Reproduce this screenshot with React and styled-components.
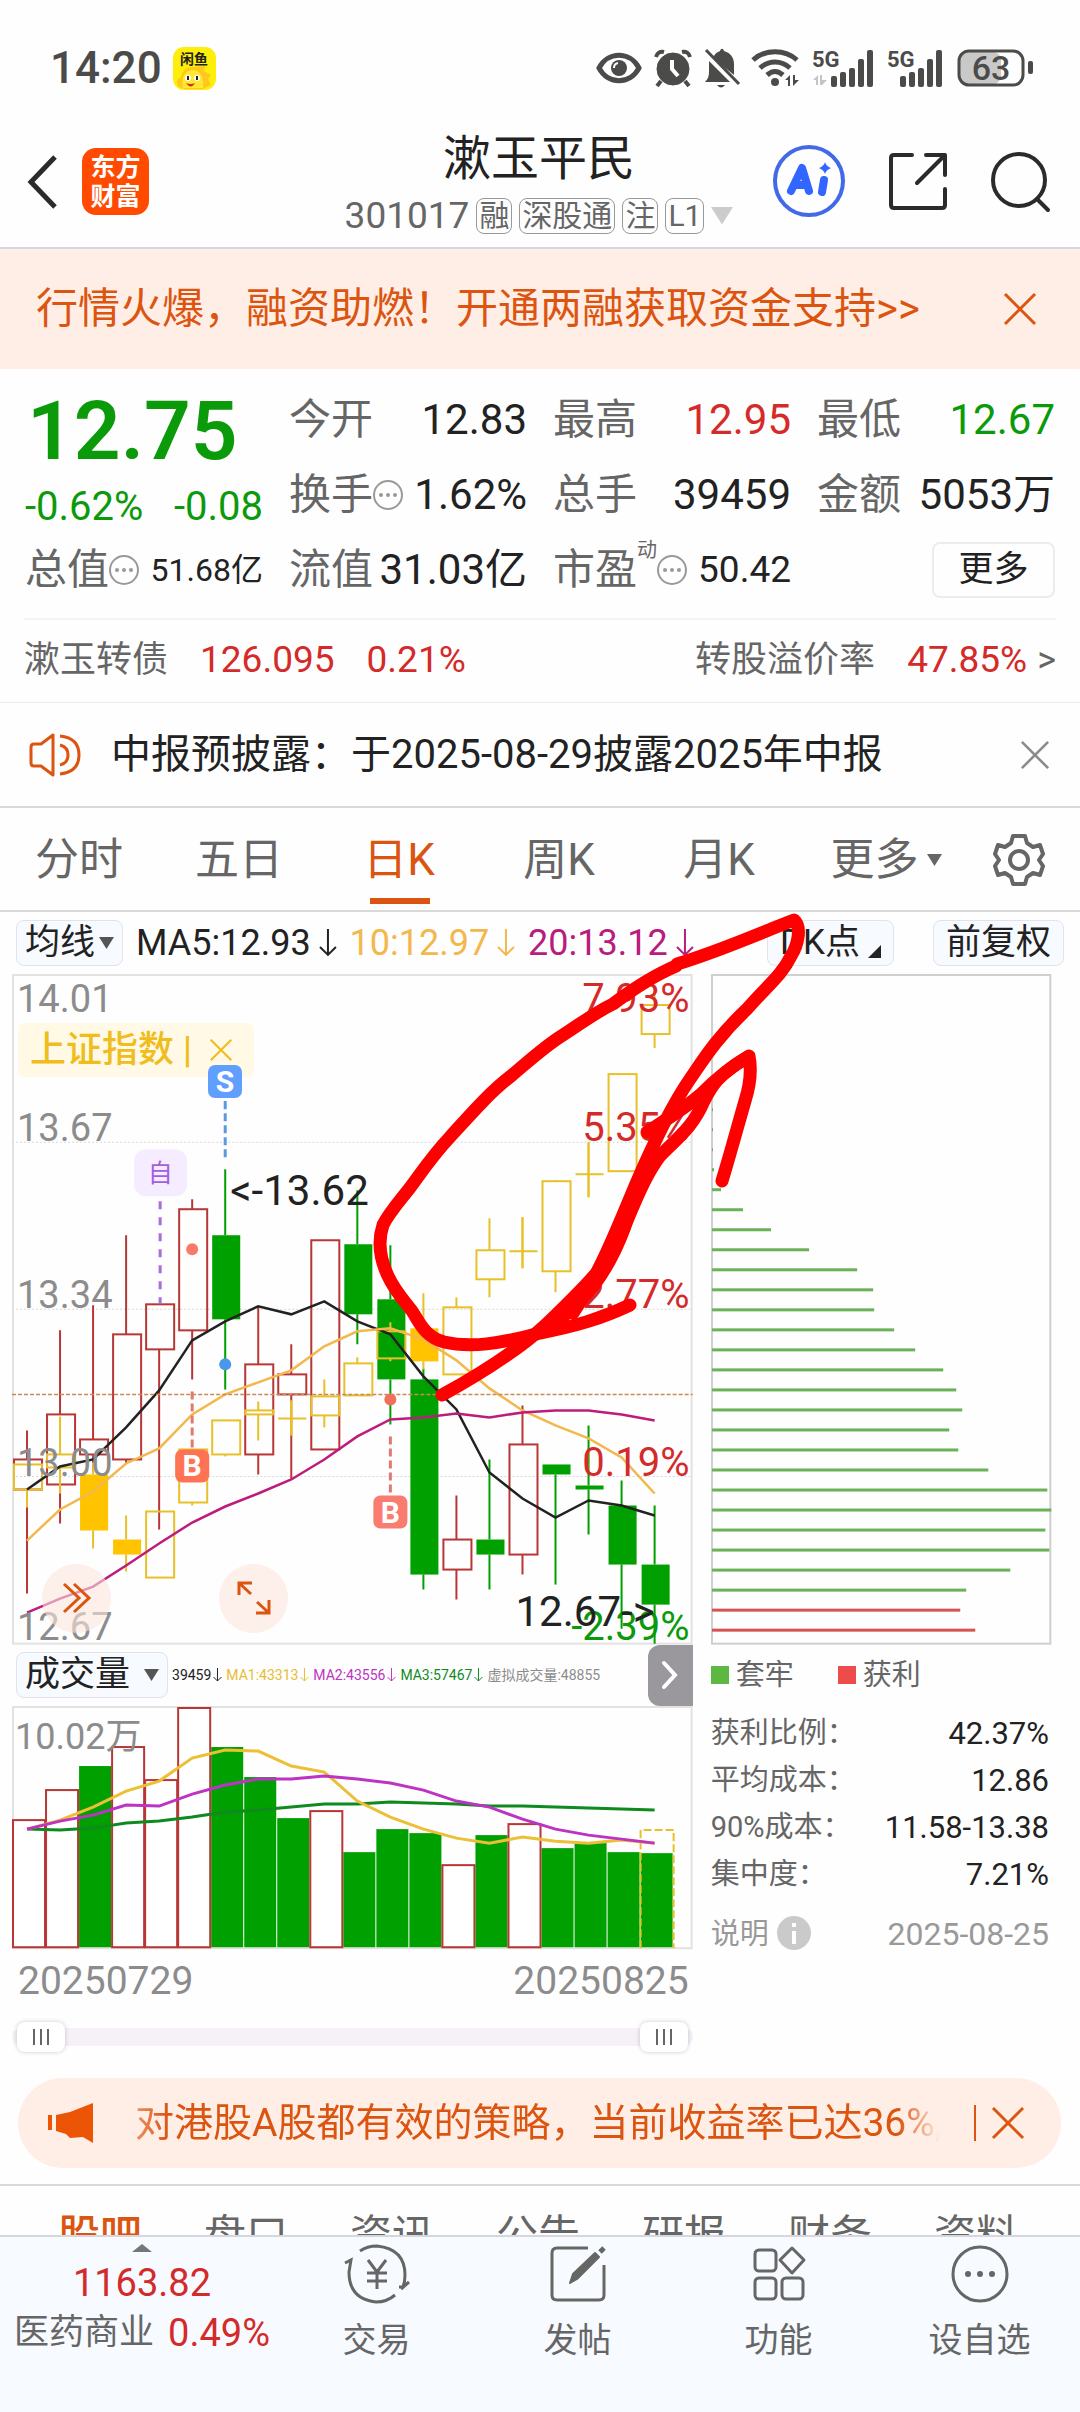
import React from "react";
import styled, { createGlobalStyle, css } from "styled-components";

const color = {
  text: "#222",
  label: "#666",
  muted: "#8c8c8c",
  up: "#d42a2a",
  down: "#0a9a0a",
  candleUp: "#b93636",
  candleDown: "#00a000",
  index: "#e8c02a",
  accent: "#dc5510",
  peach: "#ffeee6",
  line: "#d9d9d9"
};

const GlobalStyle = createGlobalStyle`
  *, *::before, *::after {
    box-sizing: border-box;
  }
  body {
    margin: 0;
    background: #fefefe;
    color: ${color.text};
    font-family: Roboto, "Noto Sans CJK SC", sans-serif;
  }
  button {
    font: inherit;
    color: inherit;
    background: none;
    border: 0;
    padding: 0;
    cursor: pointer;
  }
  a {
    color: inherit;
    text-decoration: none;
  }
  svg {
    display: block;
    flex-shrink: 0;
    overflow: visible;
  }
`;

const Page = styled.div`
  display: flex;
  flex-direction: column;
  min-height: 100vh;
  overflow: hidden;
`;

/* ---------- status bar ---------- */

const StatusBar = styled.div`
  display: flex;
  align-items: center;
  min-height: 124px;
  padding: 12px 46px 0 50px;
  color: #4b4b49;
`;

const Clock = styled.time`
  font-size: 44px;
  line-height: 48px;
  font-weight: 500;
`;

const StatusIcons = styled.div`
  display: flex;
  align-items: center;
  gap: 12px;
  margin-left: auto;
`;

const FishIcon = styled.svg`
  margin-left: 11px;
`;

/* ---------- header ---------- */

const Header = styled.header`
  display: grid;
  grid-template-columns: 1fr auto 1fr;
  align-items: center;
  min-height: 125px;
  padding: 0 29px 0 27px;
  border-bottom: 2px solid #d5d7e0;
`;

const HeaderSide = styled.div`
  display: flex;
  align-items: center;
  justify-content: ${props => (props.$end ? "flex-end" : "flex-start")};
  gap: ${props => (props.$end ? 43 : 24)}px;
  padding-bottom: 8px;
`;

const Brand = styled.a`
  display: flex;
  align-items: center;
  justify-content: center;
  width: 67px;
  height: 67px;
  border-radius: 14px;
  background: #ff4a00;
  color: #fff;
  font-size: 25px;
  line-height: 29px;
  font-weight: 700;
  text-align: center;
`;

const Title = styled.h1`
  margin: 0;
  font-size: 48px;
  line-height: 60px;
  font-weight: 400;
  text-align: center;
`;

const SubTitle = styled.div`
  display: flex;
  align-items: center;
  justify-content: center;
  gap: 7px;
  font-size: 37px;
  line-height: 54px;
  color: ${color.label};
`;

const Tag = styled.span`
  height: 36px;
  padding: 0 2px;
  border: 1px solid #999;
  border-radius: 8px;
  font-size: 30px;
  line-height: 34px;
`;

/* ---------- strips ---------- */

const Promo = styled.section`
  display: flex;
  align-items: center;
  justify-content: space-between;
  min-height: 120px;
  padding: 0 44px 0 36px;
  background: ${color.peach};
  color: ${color.accent};
  font-size: 42px;
  line-height: 60px;
`;

const Notice = styled.section`
  display: flex;
  align-items: center;
  min-height: 105px;
  padding: 0 31px 0 29px;
  border-bottom: 2px solid ${color.line};
  font-size: 40px;
  line-height: 56px;

  > button {
    margin-left: auto;
  }
`;

const NoticeText = styled.a`
  margin-left: 30px;
`;

/* ---------- quote ---------- */

const Quote = styled.section`
  display: grid;
  grid-template-columns: repeat(4, 1fr);
  grid-auto-rows: 75px;
  column-gap: 26px;
  padding: 13px 25px 11px;
`;

const PriceCell = styled.div`
  grid-row: span 2;
  color: ${color.down};
`;

const Price = styled.div`
  padding-left: 2px;
  font-size: 82px;
  line-height: 98px;
  font-weight: 600;
`;

const Change = styled.div`
  display: flex;
  justify-content: space-between;
  font-size: 40px;
  line-height: 54px;
`;

const Stat = styled.div`
  display: flex;
  align-items: center;
  white-space: nowrap;
  font-size: 42px;
  line-height: 60px;
  color: ${color.label};
`;

const StatValue = styled.span`
  margin-left: auto;
  font-size: ${props => props.$size || 42}px;
  color: ${props => color[props.$tone] || color.text};
`;

const Super = styled.sup`
  align-self: flex-start;
  font-size: 20px;
  line-height: 36px;
`;

const MoreButton = styled.button`
  justify-self: end;
  align-self: center;
  width: 123px;
  height: 56px;
  border: 2px solid #ececee;
  border-radius: 8px;
  font-size: 35px;
  line-height: 50px;
`;

const BondRow = styled.a`
  display: flex;
  align-items: center;
  gap: 32px;
  min-height: 84px;
  margin: 0 24px;
  padding-bottom: 2px;
  border-top: 2px solid #f4f4f4;
  font-size: 36px;
  line-height: 50px;
  color: ${color.label};
`;

const BondRule = styled.div`
  border-bottom: 1px solid #ececec;
`;

const BondValue = styled.span`
  font-size: 37px;
  color: ${color.up};
`;

const BondGroup = styled.span`
  display: flex;
  align-items: center;
  gap: ${props => (props.$tight ? 10 : 32)}px;
  margin-left: ${props => (props.$end ? "auto" : 0)};
`;

/* ---------- period tabs ---------- */

const Tabs = styled.nav`
  display: grid;
  grid-template-columns: repeat(6, 4fr) 3fr;
  align-items: stretch;
  min-height: 104px;
  border-bottom: 2px solid ${color.line};
`;

const Tab = styled.button`
  display: flex;
  align-items: center;
  justify-content: center;
  gap: 8px;
  padding: ${props => (props.$menu ? "2px 0 0 12px" : "2px 2px 0 0")};
  font-size: 44px;
  line-height: 60px;
  color: ${color.label};
  border-top: 6px solid transparent;
  border-bottom: 6px solid transparent;

  ${props =>
    props.$active &&
    css`
      color: ${color.accent};
      background: linear-gradient(${color.accent}, ${color.accent}) center
        bottom / 60px 6px no-repeat;
    `}
`;

/* ---------- chart toolbars ---------- */

const ChartArea = styled.section`
  position: relative;
`;

const Toolbar = styled.div`
  display: flex;
  align-items: center;
  gap: 13px;
  min-height: 62px;
  padding: 0 16px;
  font-size: 36px;
  line-height: 46px;
`;

const Chip = styled.button`
  display: flex;
  align-items: center;
  gap: ${props => props.$gap || 4}px;
  height: 46px;
  padding: 0 ${props => (props.$wide ? 12 : 8)}px;
  border: 1px solid #dfe3ec;
  border-radius: 8px;
  background: #f7faff;
  font-size: 35px;
  line-height: 44px;
  white-space: nowrap;
`;

const ToolbarEnd = styled.div`
  display: flex;
  gap: 39px;
  margin-left: auto;
`;

const MaLabel = styled.span`
  display: flex;
  align-items: center;
  gap: 8px;
  color: ${props => props.$color};
`;

const Columns = styled.div`
  display: grid;
  grid-template-columns: 2fr 1fr;
  column-gap: 18px;
  padding: 0 29px 0 12px;
`;

const ChartBox = styled.div`
  position: relative;
`;

const ChartSvg = styled.svg`
  width: 100%;
  height: auto;

  text {
    font-size: 38px;
  }
  .percent {
    font-size: 40px;
  }
  .note {
    font-size: 42px;
  }
  .marker {
    font-size: 30px;
    font-weight: 700;
    fill: #fff;
  }
  .self {
    font-size: 25px;
    fill: #a35fe0;
  }
  .volume {
    font-size: 36px;
  }
`;

const Ink = styled.svg`
  position: absolute;
  top: 0;
  left: 0;
  width: 100%;
  pointer-events: none;
`;

const OverlayPill = styled.button`
  position: absolute;
  top: 49px;
  left: 6px;
  display: flex;
  align-items: center;
  gap: 18px;
  height: 54px;
  padding: 0 22px 0 12px;
  border-radius: 6px;
  background: rgba(255, 247, 220, 0.7);
  color: #efbd1c;
  font-size: 36px;
  line-height: 54px;
  font-weight: 500;
  white-space: nowrap;
`;

const RoundButton = styled.button`
  position: absolute;
  bottom: 12px;
  left: ${props => props.$left}px;
  display: flex;
  align-items: center;
  justify-content: center;
  width: 69px;
  height: 69px;
  border-radius: 50%;
  background: rgba(252, 228, 218, 0.6);
`;

const VolumeBar = styled.div`
  display: flex;
  align-items: center;
  gap: 4px;
  min-height: 61px;
  padding-left: 4px;
  white-space: nowrap;
`;

const VolumeLabel = styled.span`
  display: flex;
  align-items: center;
  gap: 2px;
  color: ${props => props.$color};
  font-size: 14px;
  line-height: 24px;
`;

const Expand = styled.button`
  display: flex;
  align-items: center;
  justify-content: center;
  width: 45px;
  height: 61px;
  margin-left: auto;
  border-radius: 12px 0 0 12px;
  background: #9a989c;
`;

const Dates = styled.div`
  display: flex;
  justify-content: space-between;
  padding: 8px 4px 0 6px;
  font-size: 39px;
  line-height: 48px;
  color: ${color.muted};
`;

const Range = styled.div`
  display: grid;
  align-items: center;
  height: 18px;
  margin-top: 23px;
  padding: 0 5px;
  border-radius: 9px;
  background: #f5f1f6;
`;

const RangeHandle = styled.input`
  grid-area: 1 / 1;
  appearance: none;
  width: 100%;
  height: 18px;
  margin: 0;
  background: none;
  pointer-events: none;

  &::-webkit-slider-thumb {
    appearance: none;
    pointer-events: auto;
    width: 48px;
    height: 30px;
    border-radius: 8px;
    box-shadow: 0 0 4px rgba(60, 40, 80, 0.25);
    background: linear-gradient(
          90deg,
          #666 2px,
          transparent 2px 7px,
          #666 7px 9px,
          transparent 9px 14px,
          #666 14px
        )
        center / 16px 16px no-repeat,
      #fff;
  }
`;

/* ---------- chip distribution ---------- */

const Legend = styled.div`
  display: flex;
  gap: 44px;
  padding-top: 8px;
  font-size: 29px;
  line-height: 44px;
  color: ${color.label};
`;

const LegendItem = styled.span`
  display: flex;
  align-items: center;
  gap: 7px;

  &::before {
    content: "";
    width: 18px;
    height: 18px;
    background: ${props => props.$color};
  }
`;

const CostTable = styled.table`
  width: 100%;
  margin-top: 13px;
  border-collapse: collapse;
  font-size: 31px;
  line-height: 47px;

  th {
    padding: 0;
    font-size: 29px;
    font-weight: 400;
    text-align: left;
    color: ${color.label};
  }
  td {
    padding: 0 2px 0 0;
    text-align: right;
  }
`;

const CostFoot = styled.div`
  display: flex;
  align-items: center;
  gap: 8px;
  padding: 12px 2px 0 0;
  font-size: 29px;
  line-height: 48px;
  color: #999;

  time {
    margin-left: auto;
    font-size: 32px;
  }
`;

/* ---------- bottom ---------- */

const Strategy = styled.section`
  display: flex;
  align-items: center;
  min-height: 90px;
  margin: 32px 19px 16px 18px;
  padding: 0 37px 0 30px;
  border-radius: 45px;
  background: ${color.peach};
  color: ${color.accent};
`;

const StrategyText = styled.a`
  flex: 1;
  min-width: 0;
  margin: 0 18px 0 41px;
  overflow: hidden;
  white-space: nowrap;
  font-size: 39px;
  line-height: 56px;
  mask-image: linear-gradient(
    90deg,
    rgba(0, 0, 0, 0.6),
    #000 4% 93%,
    transparent 98%
  );
`;

const StrategyRule = styled.span`
  width: 2px;
  height: 36px;
  margin-right: 16px;
  background: ${color.accent};
`;

const SectionTabs = styled.nav`
  display: grid;
  grid-template-columns: repeat(7, 1fr);
  height: 51px;
  padding: 20px 31px 0 27px;
  overflow: hidden;
  border-top: 2px solid ${color.line};
  font-size: 42px;
  line-height: 60px;
  text-align: center;
  color: ${color.label};
`;

const SectionTab = styled.a`
  color: ${props => (props.$active ? color.accent : "inherit")};
  font-weight: ${props => (props.$active ? 500 : 400)};
`;

const BottomNav = styled.nav`
  display: grid;
  grid-template-columns: 276fr repeat(4, 201fr);
  flex: 1;
  min-height: 174px;
  border-top: 2px solid #d5d7e0;
  background: #f7faff;
  color: ${color.label};
`;

const NavItem = styled.a`
  display: flex;
  flex-direction: column;
  align-items: center;
  gap: 12px;
  padding-top: 8px;
  font-size: 34px;
  line-height: 50px;
`;

const IndexItem = styled.a`
  display: flex;
  flex-direction: column;
  align-items: center;
  padding: 7px 0 0 8px;
  white-space: nowrap;
  font-size: 35px;
  line-height: 50px;
`;

const IndexValue = styled.span`
  margin-top: 6px;
  font-size: 38px;
  color: ${color.up};
`;

const IndexRow = styled.span`
  display: flex;
  gap: 14px;

  strong {
    font-size: 38px;
    font-weight: 400;
    color: ${color.up};
  }
`;

/* ---------- small drawings ---------- */

const Cross = ({ size = 32, stroke = color.accent, width = 3 }) => (
  <svg width={size} height={size} viewBox="0 0 32 32" stroke={stroke} strokeWidth={width}>
    <path d="M1 1 31 31M31 1 1 31" />
  </svg>
);

const Triangle = ({ size = 15, fill = "#555" }) => (
  <svg width={size} height={size * 0.8} viewBox="0 0 20 16" fill={fill}>
    <path d="M0 0H20L10 16Z" />
  </svg>
);

const DownArrow = ({ size = 28 }) => (
  <svg width={size * 0.64} height={size} viewBox="0 0 18 28" fill="none" stroke="currentColor" strokeWidth="2">
    <path d="M9 0V26M1 18 9 26 17 18" />
  </svg>
);

const Dots = () => (
  <svg width="30" height="30" viewBox="0 0 30 30" fill="#999">
    <circle cx="15" cy="15" r="14" fill="none" stroke="#999" strokeWidth="2" />
    <circle cx="8" cy="15" r="2" />
    <circle cx="15" cy="15" r="2" />
    <circle cx="22" cy="15" r="2" />
  </svg>
);

const Signal = ({ faded }) => (
  <svg width={faded ? 63 : 58} height="38" viewBox={faded ? "0 0 63 38" : "0 0 58 38"} fill="#4b4b49">
    <text x="0" y="18" fontSize="22" fontWeight="700">
      5G
    </text>
    {faded && <path d="M1 31 6 26V36H4V31ZM8 26V36H10L15 31H10V26Z" fill="#c4c4c4" />}
    {[0, 1, 2, 3, 4].map(i => (
      <rect
        key={i}
        x={(faded ? 19 : 13) + i * 9}
        y={[27, 23, 19, 10, 1][i]}
        width="6"
        height={[11, 15, 19, 28, 37][i]}
        rx="2"
      />
    ))}
  </svg>
);

const StatusGlyphs = () => (
  <StatusIcons>
    <svg width="46" height="30" viewBox="0 0 46 30">
      <path d="M3 15C12 -2 34 -2 43 15C34 32 12 32 3 15Z" fill="none" stroke="#4b4b49" strokeWidth="5" />
      <circle cx="23" cy="15" r="8" fill="#4b4b49" />
      <path d="M18 15a5 5 0 0 1 4-5" fill="none" stroke="#fff" strokeWidth="2" />
    </svg>
    <svg width="38" height="38" viewBox="0 0 38 38" stroke="#4b4b49" fill="none">
      <circle cx="19" cy="20" r="16" fill="#4b4b49" />
      <path d="M2 8C3 4 6 2 10 3M28 3c4-1 7 1 8 5M7 32l-4 5M31 32l4 5" strokeWidth="4" />
      <path d="M18 11V20L24 27" stroke="#fff" strokeWidth="4" />
    </svg>
    <svg width="36" height="40" viewBox="0 0 36 40" fill="#4b4b49">
      <path d="M9 10C11 5 14 4 16 3C17 0 19 0 20 3C27 5 30 10 30 16V27ZM5 13 26 34H1C4 31 5 28 5 24Z" />
      <path d="M2 2 35 36" stroke="#4b4b49" strokeWidth="3" />
      <path d="M13 37H21Q17 42 13 37Z" />
    </svg>
    <svg width="48" height="38" viewBox="0 0 48 38" fill="none" stroke="#4b4b49" strokeWidth="5">
      <path d="M1 11C13 0 33 0 45 11M8 19C17 11 29 11 38 19M15 26Q23 19 31 26" />
      <circle cx="23" cy="33" r="4" fill="#4b4b49" stroke="none" />
      <path d="M33 31 38 26V37H36V31ZM41 26V37L47 31H43V26Z" fill="#4b4b49" stroke="none" />
    </svg>
    <Signal faded />
    <Signal />
    <svg width="77" height="38" viewBox="0 0 77 38">
      <rect x="2" y="3" width="42" height="32" rx="8" fill="#c9c9c9" />
      <rect x="2" y="2" width="64" height="34" rx="10" fill="none" stroke="#4b4b49" strokeWidth="3" />
      <rect x="71" y="12" width="5" height="13" rx="2" fill="#4b4b49" />
      <text x="34" y="31" textAnchor="middle" fontSize="34" fontWeight="500" fill="#4b4b49">
        63
      </text>
    </svg>
  </StatusIcons>
);

/* ---------- chart data, in chart units ---------- */

const step = 33;
const centre = i => 27 + i * step;

// kind, high, body top, body bottom, low
const candles = [
  ["up", 1430, 1459, 1489, 1593],
  ["up", 1330, 1414, 1484, 1523],
  ["up", 1305, 1439, 1454, 1471],
  ["up", 1235, 1334, 1459, 1463],
  ["up", 1304, 1304, 1349, 1529],
  ["up", 1199, 1209, 1330, 1379],
  ["down", 1169, 1235, 1319, 1389],
  ["up", 1306, 1364, 1454, 1474],
  ["up", 1344, 1374, 1394, 1478],
  ["up", 1240, 1240, 1449, 1449],
  ["down", 1190, 1244, 1314, 1344],
  ["down", 1245, 1299, 1379, 1424],
  ["down", 1368, 1379, 1574, 1589],
  ["up", 1495, 1539, 1569, 1599],
  ["down", 1459, 1539, 1554, 1589],
  ["up", 1405, 1444, 1554, 1574],
  ["down", 1464, 1464, 1474, 1584],
  ["down", 1425, 1485, 1489, 1534],
  ["down", 1480, 1505, 1564, 1628],
  ["down", 1505, 1564, 1604, 1643]
];

const indexCandles = [
  ["hollow", 1464, 1464, 1489, 1507],
  ["hollow", 1416, 1454, 1467, 1493],
  ["solid", 1462, 1474, 1530, 1548],
  ["solid", 1515, 1539, 1554, 1571],
  ["hollow", 1511, 1511, 1577, 1577],
  ["hollow", 1449, 1449, 1502, 1505],
  ["hollow", 1420, 1420, 1454, 1456],
  ["hollow", 1401, 1410, 1414, 1440],
  ["cross", 1400, 1418, 1418, 1435],
  ["hollow", 1379, 1396, 1415, 1427],
  ["hollow", 1357, 1363, 1395, 1395],
  ["hollow", 1322, 1331, 1358, 1361],
  ["solid", 1293, 1328, 1361, 1369],
  ["hollow", 1297, 1307, 1374, 1374],
  ["hollow", 1218, 1250, 1279, 1297],
  ["cross", 1217, 1251, 1251, 1268],
  ["hollow", 1180, 1181, 1271, 1292],
  ["cross", 1142, 1174, 1174, 1197],
  ["hollow", 1074, 1074, 1171, 1171],
  ["hollow", 987, 1005, 1034, 1048]
];

const averages = [
  ["#222", [1489, 1466, 1459, 1427, 1390, 1340, 1321, 1306, 1314, 1301, 1321, 1334, 1376, 1409, 1472, 1498, 1517, 1500, 1505, 1515]],
  ["#f3b84c", [1540, 1509, 1491, 1463, 1448, 1414, 1394, 1382, 1370, 1346, 1331, 1328, 1339, 1360, 1388, 1410, 1425, 1438, 1457, 1493]],
  ["#bd1c7d", [1612, 1598, 1586, 1565, 1543, 1522, 1506, 1493, 1479, 1459, 1436, 1419, 1417, 1413, 1417, 1412, 1410, 1410, 1414, 1420]]
];

const priceAxis = [
  [1012, "14.01", "7.93%"],
  [1141, "13.67", "5.35%"],
  [1308, "13.34", "2.77%"],
  [1476, "13.00", "0.19%"],
  [1639, "12.67", "-2.39%"]
];

const volumes = [
  ["up", 1820], ["up", 1790], ["down", 1766], ["up", 1747], ["up", 1780],
  ["up", 1708], ["down", 1747], ["down", 1777], ["down", 1818], ["up", 1811],
  ["down", 1852], ["down", 1829], ["down", 1833], ["up", 1865], ["down", 1835],
  ["up", 1824], ["down", 1848], ["down", 1843], ["down", 1852], ["down", 1853]
];

const volumeAverages = [
  ["#0f8a1f", [1829, 1830, 1828, 1823, 1821, 1817, 1812, 1810, 1807, 1804, 1804, 1802, 1803, 1804, 1806, 1806, 1807, 1808, 1809, 1810]],
  ["#ecbf35", [1829, 1820, 1807, 1791, 1781, 1758, 1750, 1751, 1766, 1772, 1801, 1817, 1829, 1838, 1843, 1837, 1841, 1843, 1840, 1843]],
  ["#bd33c4", [1829, 1821, 1815, 1805, 1806, 1794, 1785, 1779, 1779, 1776, 1779, 1783, 1790, 1801, 1807, 1819, 1829, 1835, 1839, 1843]]
];

const distribution = [
  1, 1, 1, 2, 9, 31, 59, 97, 145, 161, 162, 182, 203, 231, 244, 250, 237, 246,
  276, 335, 339, 333, 337, 298, 254, 248, 263
];

const toPoints = values => values.map((y, i) => `${centre(i)},${y}`).join(" ");

const Candle = ({ x, data }) => {
  const [kind, high, top, bottom, low] = data;
  const stroke = {
    up: color.candleUp,
    down: color.candleDown
  }[kind] || color.index;
  const filled = kind === "down" || kind === "solid";

  return (
    <g stroke={stroke} strokeWidth="2" fill="none">
      <path d={`M${x} ${high}V${top}M${x} ${bottom}V${low}`} />
      {kind === "cross" && <path d={`M${x - 13} ${top}h28M${x} ${high}V${low}`} />}
      {filled && (
        <rect
          x={x - 13}
          y={top}
          width="28"
          height={bottom - top}
          fill={kind === "down" ? color.candleDown : "#ffc300"}
          stroke="none"
        />
      )}
      {!filled && kind !== "cross" && (
        <rect x={x - 13} y={top} width="28" height={bottom - top} />
      )}
    </g>
  );
};

const Marker = ({ x, y, label, fill }) => (
  <g>
    <rect x={x - 17} y={y} width="34" height="33" rx="7" fill={fill} />
    <text className="marker" x={x} y={y + 27} textAnchor="middle">
      {label}
    </text>
  </g>
);

const PriceChart = () => (
  <ChartSvg viewBox="12 974 680 670" role="img" aria-label="日K">
    <rect x="13" y="975" width="678" height="668" fill="none" stroke="#e2e2e2" strokeWidth="2" />
    <path
      d="M12 1142H692M12 1309H692M12 1476H692"
      stroke="#d8d8d8"
      strokeDasharray="2 2"
    />
    {candles.map((data, i) => (
      <Candle key={i} x={centre(i)} data={data} />
    ))}
    {indexCandles.map((data, i) => (
      <Candle key={i} x={centre(i)} data={data} />
    ))}
    {averages.map(([stroke, values]) => (
      <polyline key={stroke} points={toPoints(values)} fill="none" stroke={stroke} strokeWidth="2.5" />
    ))}
    <path d="M12 1394H692" stroke="#c98a55" strokeWidth="1.5" strokeDasharray="4 2" />
    {priceAxis.map(([y, price, percent], i) => (
      <g key={y}>
        <text x="17" y={y} fill={color.muted}>
          {price}
        </text>
        <text className="percent" x="689" y={y} textAnchor="end" fill={i === 4 ? color.down : color.up}>
          {percent}
        </text>
      </g>
    ))}
    <text className="note" x="230" y="1205" fill="#222">
      {"<-13.62"}
    </text>
    <text className="note" x="654" y="1625" textAnchor="end" fill="#222">
      {"12.67->"}
    </text>
    <g strokeWidth="3">
      <path d="M225 1101V1158" stroke="#5b9bdc" strokeDasharray="8 4" />
      <path d="M160 1201V1304" stroke="#a96be0" strokeDasharray="8 8" />
      <path d="M192 1391V1448M390 1436V1492" stroke="#e07a6c" strokeDasharray="8 4" />
    </g>
    <circle cx="225" cy="1364" r="6" fill="#4a96e8" />
    <circle cx="192" cy="1249" r="6" fill="#fa7a6a" />
    <circle cx="390" cy="1399" r="6" fill="#f0705c" />
    <rect x="134" y="1149" width="53" height="47" rx="12" fill="#f5ecff" />
    <text className="self" x="160" y="1182" textAnchor="middle">
      自
    </text>
    <Marker x={192} y={1449} label="B" fill="#ff7355" />
    <Marker x={390} y={1495} label="B" fill="#fa7b70" />
  </ChartSvg>
);

/** Sell marker, kept above the overlay pill. */
const SellMarker = styled.span`
  position: absolute;
  top: 91px;
  left: 196px;
  width: 34px;
  height: 33px;
  border-radius: 7px;
  background: #619fff;
  color: #fff;
  font-size: 30px;
  line-height: 33px;
  font-weight: 700;
  text-align: center;
`;

const VolumeChart = () => (
  <ChartSvg viewBox="12 1706 680 243" role="img" aria-label="成交量">
    <rect x="13" y="1707" width="678" height="241" fill="none" stroke="#e2e2e2" strokeWidth="2" />
    {volumes.map(([kind, top], i) =>
      kind === "up" ? (
        <rect
          key={i}
          x={13 + i * step}
          y={top}
          width={step - 1}
          height={1947 - top}
          fill="#fff"
          stroke={color.candleUp}
          strokeWidth="2"
        />
      ) : (
        <rect key={i} x={13 + i * step} y={top} width={step - 1} height={1947 - top} fill={color.candleDown} />
      )
    )}
    <path d="M640 1948V1830H673V1948" fill="none" stroke={color.index} strokeWidth="2" strokeDasharray="8 3" />
    {volumeAverages.map(([stroke, values]) => (
      <polyline key={stroke} points={toPoints(values)} fill="none" stroke={stroke} strokeWidth="3" />
    ))}
    <text className="volume" x="15" y="1749" fill={color.muted}>
      10.02万
    </text>
  </ChartSvg>
);

const DistributionChart = () => (
  <ChartSvg viewBox="710 974 340 670" role="img" aria-label="筹码分布">
    <rect x="711" y="975" width="338" height="668" fill="none" stroke="#cfcfcf" strokeWidth="2" />
    {distribution.map((length, i) => (
      <rect
        key={i}
        x="711"
        y={1108 + i * 20}
        width={length}
        height="3"
        fill={i > 24 ? "#d65353" : "#6bb157"}
      />
    ))}
  </ChartSvg>
);

/** Hand-drawn circle and arrow laid over both charts. */
const Annotation = () => (
  <Ink viewBox="0 911 1080 500" fill="none" stroke="#ff0000" strokeWidth="13" strokeLinecap="round" strokeLinejoin="round">
    <path d="M677 963C720 950 760 932 794 919C802 926 798 944 791 955C782 974 768 984 747 1008C715 1038 700 1064 690 1078C668 1110 650 1150 635 1185C617 1228 600 1272 573 1312" />
    <path d="M676 965C655 974 633 988 613 1003C594 1012 579 1024 563 1034C545 1045 529 1060 511 1075C490 1091 470 1114 450 1136C432 1155 421 1172 409 1188C398 1202 389 1212 383 1224C377 1242 380 1258 388 1275C396 1292 404 1299 412 1310C420 1322 425 1336 444 1341C470 1347 500 1343 540 1332C576 1325 600 1318 630 1304" />
    <path d="M442 1394C464 1382 492 1365 513 1350C534 1336 552 1318 572 1298C590 1280 606 1264 618 1238C632 1212 640 1182 660 1155C676 1138 692 1128 704 1100C712 1084 718 1074 749 1055C752 1070 750 1084 745 1100C738 1124 730 1154 722 1180" />
    <path d="M647 1131C664 1120 684 1108 700 1094C714 1080 730 1066 748 1056" />
    <path d="M550 1324C580 1306 606 1276 624 1228L648 1160" />
  </Ink>
);

const GearIcon = () => (
  <svg width="50" height="52" viewBox="0 0 50 52" fill="none" stroke="#666" strokeWidth="4" strokeLinejoin="round">
    <path d="M19 2H31L33 9L39 13L46 11L49 20L45 26L49 32L46 41L39 39L33 43L31 50H19L17 43L11 39L4 41L1 32L5 26L1 20L4 11L11 13L17 9Z" />
    <circle cx="25" cy="26" r="9" />
  </svg>
);

const periods = ["分时", "五日", "日K", "周K", "月K"];

const costs = [
  ["获利比例：", "42.37%"],
  ["平均成本：", "12.86"],
  ["90%成本：", "11.58-13.38"],
  ["集中度：", "7.21%"]
];

const sections = ["股吧", "盘口", "资讯", "公告", "研报", "财务", "资料"];

const volumeLabels = [
  ["#222", "39459"],
  ["#e8bd30", "MA1:43313"],
  ["#bd33c4", "MA2:43556"],
  ["#0f8a1f", "MA3:57467"]
];

const App = () => (
  <Page>
    <GlobalStyle />
    <StatusBar>
      <Clock>14:20</Clock>
      <FishIcon width="43" height="43" viewBox="0 0 43 43">
        <rect width="43" height="43" rx="11" fill="#ffee0a" />
        <text x="21" y="17" fontSize="14" fontWeight="700" textAnchor="middle" fill="#222">
          闲鱼
        </text>
        <path d="M6 40Q1 33 8 30Q10 19 22 20L32 19L31 24L38 28L35 32L38 38L30 42H12Z" fill="#ffc91c" />
        <path d="M10 41Q7 24 20 23Q31 24 30 41Z" fill="#ffe733" />
        <circle cx="15" cy="31" r="3" fill="#fff" />
        <circle cx="24" cy="31" r="3" fill="#fff" />
        <path d="M15 29v4M24 29v4" stroke="#222" strokeWidth="2" />
        <path d="M13 36Q18 38 22 36Q18 43 13 36Z" fill="#c8321e" />
      </FishIcon>
      <StatusGlyphs />
    </StatusBar>

    <Header>
      <HeaderSide>
        <button aria-label="返回">
          <svg width="31" height="54" viewBox="0 0 31 54" fill="none" stroke="#2b2b2b" strokeWidth="5">
            <path d="M28 2 4 27 28 52" />
          </svg>
        </button>
        <Brand href="#">
          东方
          <br />
          财富
        </Brand>
      </HeaderSide>
      <div>
        <Title>漱玉平民</Title>
        <SubTitle>
          301017
          <Tag>融</Tag>
          <Tag>深股通</Tag>
          <Tag>注</Tag>
          <Tag>L1</Tag>
          <Triangle size={22} fill="#ccc" />
        </SubTitle>
      </div>
      <HeaderSide $end>
        <button aria-label="Ai">
          <svg width="73" height="73" viewBox="0 0 73 73">
            <circle cx="36" cy="36" r="34" fill="none" stroke="#4169e8" strokeWidth="4" />
            <g fill="none" stroke="#3366ff" strokeWidth="8" strokeLinejoin="round" strokeLinecap="round">
              <path d="M18 46 29 23 36 46M22 40H34M51 35 49 47" />
            </g>
            <path d="M52 17Q53 21 58 23Q53 25 52 29Q51 25 46 23Q51 21 52 17Z" fill="#3366ff" />
          </svg>
        </button>
        <button aria-label="分享">
          <svg width="59" height="59" viewBox="0 0 59 59" fill="none" stroke="#2b2b2b" strokeWidth="4" strokeLinecap="round" strokeLinejoin="round">
            <path d="M23 3H5Q2 3 2 6V53Q2 56 5 56H53Q56 56 56 53V37M37 3H56V23M56 3 28 31" />
          </svg>
        </button>
        <button aria-label="搜索">
          <svg width="60" height="60" viewBox="0 0 60 60" fill="none" stroke="#2b2b2b" strokeWidth="4" strokeLinecap="round">
            <circle cx="28" cy="28" r="26" />
            <path d="M46 47 57 58" />
          </svg>
        </button>
      </HeaderSide>
    </Header>

    <Promo>
      <a href="#">行情火爆，融资助燃！开通两融获取资金支持&gt;&gt;</a>
      <button aria-label="关闭">
        <Cross />
      </button>
    </Promo>

    <Quote>
      <PriceCell>
        <Price>12.75</Price>
        <Change>
          <span>-0.62%</span>
          <span>-0.08</span>
        </Change>
      </PriceCell>
      <Stat>
        今开<StatValue>12.83</StatValue>
      </Stat>
      <Stat>
        最高<StatValue $tone="up">12.95</StatValue>
      </Stat>
      <Stat>
        最低<StatValue $tone="down">12.67</StatValue>
      </Stat>
      <Stat>
        换手
        <Dots />
        <StatValue>1.62%</StatValue>
      </Stat>
      <Stat>
        总手<StatValue>39459</StatValue>
      </Stat>
      <Stat>
        金额<StatValue>5053万</StatValue>
      </Stat>
      <Stat>
        总值
        <Dots />
        <StatValue $size={32}>51.68亿</StatValue>
      </Stat>
      <Stat>
        流值<StatValue>31.03亿</StatValue>
      </Stat>
      <Stat>
        市盈<Super>动</Super>
        <Dots />
        <StatValue $size={37}>50.42</StatValue>
      </Stat>
      <MoreButton>更多</MoreButton>
    </Quote>

    <BondRow href="#">
      <BondGroup>
        漱玉转债
        <BondValue>126.095</BondValue>
        <BondValue>0.21%</BondValue>
      </BondGroup>
      <BondGroup $end>
        转股溢价率
        <BondGroup $tight>
          <BondValue>47.85%</BondValue>
          <span>&gt;</span>
        </BondGroup>
      </BondGroup>
    </BondRow>
    <BondRule />

    <Notice>
      <svg width="52" height="44" viewBox="0 0 52 44" fill="none" stroke="#dc5510" strokeWidth="3" strokeLinejoin="round">
        <path d="M24 2V42L12 33H5Q2 33 2 30V14Q2 11 5 11H12Z" />
        <path d="M31 12Q39 14 39 22Q39 30 31 32M31 3Q50 5 50 22Q50 39 31 41" />
      </svg>
      <NoticeText href="#">中报预披露：于2025-08-29披露2025年中报</NoticeText>
      <button aria-label="关闭">
        <Cross size={28} stroke="#8c8c8c" />
      </button>
    </Notice>

    <Tabs>
      {periods.map(name => (
        <Tab key={name} $active={name === "日K"}>
          {name}
        </Tab>
      ))}
      <Tab $menu>
        更多
        <Triangle size={15} fill="#666" />
      </Tab>
      <Tab aria-label="设置">
        <GearIcon />
      </Tab>
    </Tabs>

    <ChartArea>
      <Toolbar>
        <Chip>
          均线
          <Triangle />
        </Chip>
        <MaLabel $color="#222">
          MA5:12.93
          <DownArrow />
        </MaLabel>
        <MaLabel $color="#f3b84c">
          10:12.97
          <DownArrow />
        </MaLabel>
        <MaLabel $color="#b81c7c">
          20:13.12
          <DownArrow />
        </MaLabel>
        <ToolbarEnd>
          <Chip $gap={8} $wide>
            DK点
            <svg width="13" height="32" viewBox="0 0 13 32">
              <path d="M13 18V31H0Z" fill="#222" />
            </svg>
          </Chip>
          <Chip $wide>前复权</Chip>
        </ToolbarEnd>
      </Toolbar>

      <Columns>
        <div>
          <ChartBox>
            <PriceChart />
            <OverlayPill>
              上证指数 | <Cross size={22} stroke="#efbd1c" />
            </OverlayPill>
            <SellMarker>S</SellMarker>
            <RoundButton aria-label="快进" $left={30}>
              <svg width="30" height="32" viewBox="0 0 30 32" fill="none" stroke="#dc5510" strokeWidth="3">
                <path d="M2 2 17 16 2 30M12 2 27 16 12 30" />
              </svg>
            </RoundButton>
            <RoundButton aria-label="全屏" $left={207}>
              <svg width="34" height="34" viewBox="0 0 34 34" fill="none" stroke="#dc5510" strokeWidth="3">
                <path d="M2 14V2H15M2 2 14 13M20 21 32 32M32 19V32H19" />
              </svg>
            </RoundButton>
          </ChartBox>
          <VolumeBar>
            <Chip $gap={14}>
              成交量
              <Triangle />
            </Chip>
            {volumeLabels.map(([tone, label]) => (
              <VolumeLabel key={label} $color={tone}>
                {label}
                <DownArrow size={14} />
              </VolumeLabel>
            ))}
            <VolumeLabel $color={color.muted}>虚拟成交量:48855</VolumeLabel>
            <Expand aria-label="展开">
              <svg width="16" height="28" viewBox="0 0 16 28" fill="none" stroke="#fff" strokeWidth="4" strokeLinecap="round">
                <path d="M2 2 13 14 2 26" />
              </svg>
            </Expand>
          </VolumeBar>
          <VolumeChart />
          <Dates>
            <time>20250729</time>
            <time>20250825</time>
          </Dates>
          <Range>
            <RangeHandle type="range" aria-label="开始日期" defaultValue={0} />
            <RangeHandle type="range" aria-label="结束日期" defaultValue={100} />
          </Range>
        </div>

        <div>
          <DistributionChart />
          <Legend>
            <LegendItem $color="#5db843">套牢</LegendItem>
            <LegendItem $color="#ee4b4b">获利</LegendItem>
          </Legend>
          <CostTable>
            <tbody>
              {costs.map(([name, value]) => (
                <tr key={name}>
                  <th scope="row">{name}</th>
                  <td>{value}</td>
                </tr>
              ))}
            </tbody>
          </CostTable>
          <CostFoot>
            说明
            <svg width="35" height="35" viewBox="0 0 35 35">
              <circle cx="17" cy="17" r="17" fill="#cacaca" />
              <path d="M17 15V28M17 7V11" stroke="#fff" strokeWidth="4" />
            </svg>
            <time>2025-08-25</time>
          </CostFoot>
        </div>
      </Columns>
      <Annotation />
    </ChartArea>

    <Strategy>
      <svg width="46" height="40" viewBox="0 0 46 40" fill="#eb5505">
        <path d="M0 12H4V27H0ZM8 12 22 9 45 0V40L35 34L22 35L18 31L8 28Z" />
      </svg>
      <StrategyText href="#">对港股A股都有效的策略，当前收益率已达36%,</StrategyText>
      <StrategyRule />
      <button aria-label="关闭">
        <Cross />
      </button>
    </Strategy>

    <SectionTabs>
      {sections.map((name, i) => (
        <SectionTab key={name} href="#" $active={i === 0}>
          {name}
        </SectionTab>
      ))}
    </SectionTabs>

    <BottomNav>
      <IndexItem href="#">
        <svg width="20" height="8" viewBox="0 0 20 8" fill="#777">
          <path d="M0 8H20L10 0Z" />
        </svg>
        <IndexValue>1163.82</IndexValue>
        <IndexRow>
          医药商业 <strong>0.49%</strong>
        </IndexRow>
      </IndexItem>
      <NavItem href="#">
        <svg width="64" height="58" viewBox="0 0 64 58" fill="none" stroke="#666" strokeWidth="3">
          <path d="M15 6Q22 1 32 1Q60 4 60 30Q60 37 58 42L54 42M64 37 56 44M50 50Q42 57 31 57Q4 54 4 27L6 15L0 18" />
          <path d="M23 15 32 27 41 15M32 27V44M22 28H42M22 36H42" />
        </svg>
        交易
      </NavItem>
      <NavItem href="#">
        <svg width="56" height="58" viewBox="0 0 56 58" fill="none" stroke="#666" strokeWidth="3" strokeLinejoin="round">
          <path d="M38 3H7Q2 3 2 8V50Q2 55 7 55H49Q54 55 54 50V20" />
          <path d="M20 38 23 29 45 8 49 12 27 34Z" fill="#666" strokeWidth="2" />
          <path d="M50 7 54 3" strokeWidth="5" />
        </svg>
        发帖
      </NavItem>
      <NavItem href="#">
        <svg width="54" height="58" viewBox="0 0 54 58" fill="none" stroke="#666" strokeWidth="3" strokeLinejoin="round">
          <rect x="3" y="5" width="21" height="21" rx="4" />
          <rect x="3" y="33" width="21" height="21" rx="4" />
          <rect x="30" y="33" width="21" height="21" rx="4" />
          <path d="M40 3 52 15 40 28 28 15Z" />
        </svg>
        功能
      </NavItem>
      <NavItem href="#">
        <svg width="58" height="58" viewBox="0 0 58 58" fill="#666">
          <circle cx="29" cy="29" r="27" fill="none" stroke="#666" strokeWidth="3" />
          <circle cx="17" cy="29" r="3" />
          <circle cx="29" cy="29" r="3" />
          <circle cx="41" cy="29" r="3" />
        </svg>
        设自选
      </NavItem>
    </BottomNav>
  </Page>
);

export default App;
